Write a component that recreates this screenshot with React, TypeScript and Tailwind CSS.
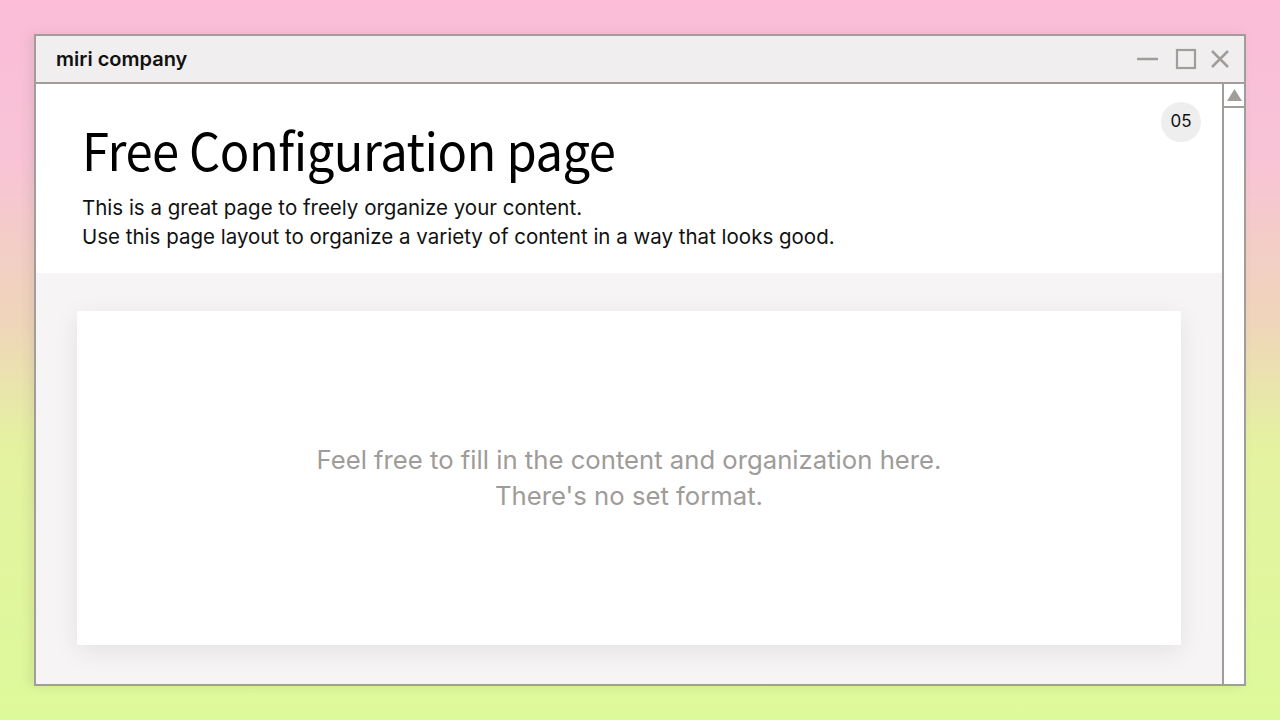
export default function App() {
  return (
    <div
      className="w-[1280px] h-[720px] p-[34px] bg-[linear-gradient(180deg,#fbbdd8_0%,#f8c3d6_22%,#efd6b9_45%,#e4f2a0_62%,#ddfa9a_100%)]"
      style={{ fontFamily: 'Inter, "Noto Sans", sans-serif' }}
    >
      <div className="flex h-full w-full flex-col border-2 border-[#a09d9b] bg-white shadow-[-4px_0_10px_rgba(120,110,110,0.15)]">
        {/* title bar */}
        <div className="flex h-[48px] shrink-0 items-center justify-between border-b-2 border-[#a09d9b] bg-[#f0eeee] pl-[20px] pr-[13px]">
          <span className="text-[20px] font-semibold text-[#111]">miri company</span>
          <div className="flex items-center">
            <svg width="24" height="24" viewBox="0 0 24 24">
              <line x1="3" y1="12" x2="26" y2="12" stroke="#a09d9b" strokeWidth="2.5" />
            </svg>
            <svg className="ml-[17px]" width="22" height="22" viewBox="0 0 22 22">
              <rect x="2" y="2" width="18" height="18" fill="none" stroke="#a09d9b" strokeWidth="2.2" />
            </svg>
            <svg className="ml-[12px]" width="22" height="22" viewBox="0 0 22 22">
              <path d="M3 3 L19 19 M19 3 L3 19" stroke="#a09d9b" strokeWidth="2.5" />
            </svg>
          </div>
        </div>

        <div className="flex min-h-0 flex-1">
          <div className="flex flex-1 flex-col">
            {/* header */}
            <div className="relative h-[189px] shrink-0 bg-white pl-[46px] pt-[30px]">
              <h1
                className="origin-left scale-x-[0.94] text-[52px] leading-[70px] tracking-[-0.5px] text-black"
                style={{ fontFamily: '"Noto Sans CJK JP", sans-serif' }}
              >
                Free Configuration page
              </h1>
              <p className="mt-[9px] text-[20.5px] leading-[29px] text-[#111]">
                This is a great page to freely organize your content.
                <br />
                Use this page layout to organize a variety of content in a way that looks good.
              </p>
              <div className="absolute right-[21px] top-[18px] flex h-[40px] w-[40px] items-center justify-center rounded-full bg-[#efeeee] text-[17px] text-[#111]">
                05
              </div>
            </div>
            {/* body */}
            <div className="flex flex-1 bg-[#f6f4f4] px-[41px] pb-[39px] pt-[38px]">
              <div className="flex flex-1 flex-col items-center justify-center bg-white text-[25.7px] leading-[36px] text-[#9e9b99] shadow-[0_6px_24px_rgba(0,0,0,0.08)]">
                <p>Feel free to fill in the content and organization here.</p>
                <p>There's no set format.</p>
              </div>
            </div>
          </div>
          {/* scrollbar */}
          <div className="flex w-[22px] shrink-0 flex-col border-l-2 border-[#a09d9b] bg-white">
            <div className="flex h-[24px] items-center justify-center border-b-2 border-[#a09d9b]">
              <svg width="17" height="14" viewBox="0 0 17 14">
                <path d="M8.5 1 L16 13 L1 13 Z" fill="#a09d9b" />
              </svg>
            </div>
          </div>
        </div>
      </div>
    </div>
  )
}
